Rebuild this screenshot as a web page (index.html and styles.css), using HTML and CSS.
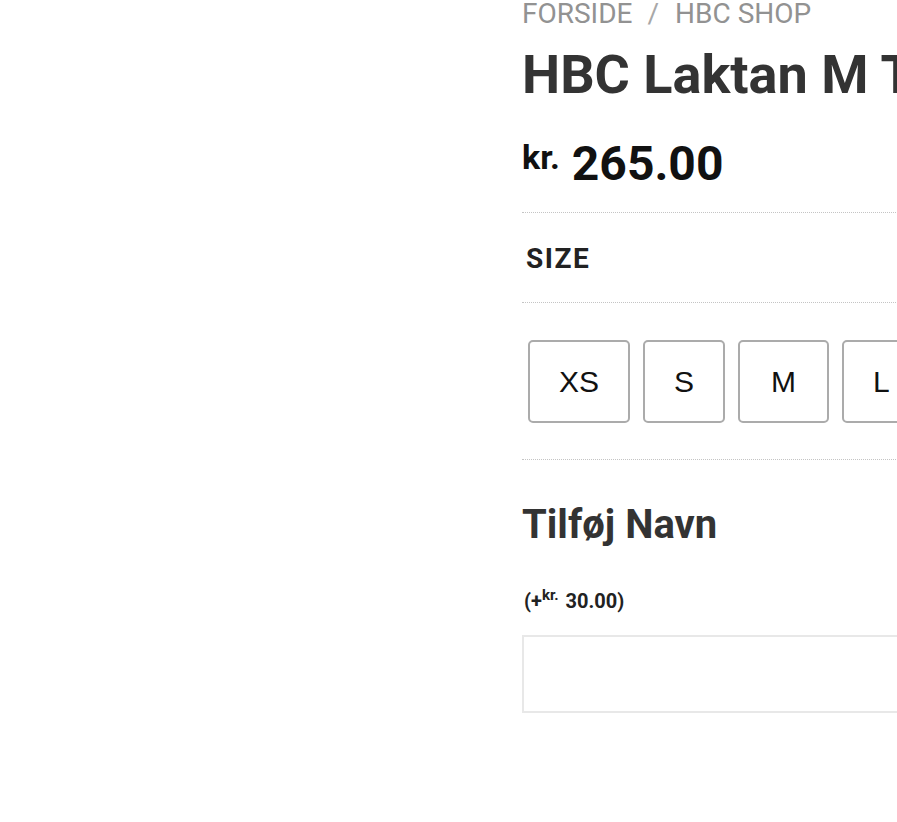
FILE: index.html
```html
<!DOCTYPE html>
<html lang="da">
<head>
<meta charset="utf-8">
<title>HBC Laktan M T-shirt</title>
<link rel="stylesheet" href="styles.css">
</head>
<body>
<div class="page">
  <div class="gallery"></div>
  <div class="summary">
    <nav class="breadcrumb"><a href="#">Forside</a><span class="sep">/</span><a href="#">HBC Shop</a></nav>
    <h1 class="title">HBC Laktan M T-shirt</h1>
    <p class="price"><span class="currency">kr.</span> 265.00</p>
    <div class="variation-label">Size</div>
    <div class="sizes">
      <button class="size">XS</button>
      <button class="size">S</button>
      <button class="size size-wide">M</button>
      <button class="size">L</button>
      <button class="size">XL</button>
    </div>
    <h2 class="addon-title">Tilføj Navn</h2>
    <p class="addon-price">(+<span class="addon-currency">kr.</span> 30.00)</p>
    <input class="addon-input" type="text">
  </div>
</div>
</body>
</html>
```
FILE: styles.css
```css
html, body {
  margin: 0;
  padding: 0;
  overflow: hidden;
  background: #fff;
}
body {
  font-family: Roboto, "Liberation Sans", Arial, sans-serif;
}
.page {
  display: grid;
  grid-template-columns: 522px 820px;
  min-width: 1342px;
}
.summary {
  display: flex;
  flex-direction: column;
}
.breadcrumb {
  font-size: 28px;
  line-height: 28px;
  text-transform: uppercase;
  color: #929292;
  white-space: nowrap;
}
.breadcrumb a {
  color: inherit;
  text-decoration: none;
}
.breadcrumb .sep {
  margin: 0 16px 0 15px;
  color: #a8a8a8;
}
.title {
  margin: 16px 0 0;
  font-size: 54px;
  line-height: 62px;
  font-weight: 700;
  color: #333;
  white-space: nowrap;
}
.price {
  margin: 29px 0 0;
  font-size: 48px;
  line-height: 58px;
  font-weight: 700;
  color: #111;
  padding-bottom: 19px;
  border-bottom: 1px dotted #c4c4c4;
}
.currency {
  font-size: 34px;
  line-height: 30px;
  vertical-align: 11px;
}
.variation-label {
  padding: 29px 4px 27px;
  font-size: 28px;
  line-height: 33px;
  font-weight: 700;
  letter-spacing: 1.5px;
  text-transform: uppercase;
  color: #222;
  border-bottom: 1px dotted #c4c4c4;
}
.sizes {
  display: flex;
  gap: 13px;
  padding: 37px 6px 36px;
  border-bottom: 1px dotted #c4c4c4;
}
.size {
  flex: none;
  height: 83px;
  padding: 0 29px;
  border: 2px solid #ababab;
  border-radius: 5px;
  background: #fff;
  font-family: "Liberation Sans", Arial, sans-serif;
  font-size: 30px;
  color: #111;
}
.size-wide {
  padding: 0 31px;
}
.addon-title {
  margin: 41px 0 0;
  font-size: 40px;
  line-height: 48px;
  font-weight: 700;
  color: #333;
}
.addon-price {
  margin: 39px 0 0;
  padding-left: 2px;
  font-size: 20px;
  line-height: 24px;
  font-weight: 700;
  color: #222;
}
.addon-currency {
  font-size: 15px;
  line-height: 14px;
  vertical-align: 8px;
  margin-right: 2px;
}
.addon-input {
  margin-top: 22px;
  height: 78px;
  box-sizing: border-box;
  border: 2px solid #e8e8e8;
  background: #fff;
  padding: 0 12px;
  font-size: 20px;
}
```
